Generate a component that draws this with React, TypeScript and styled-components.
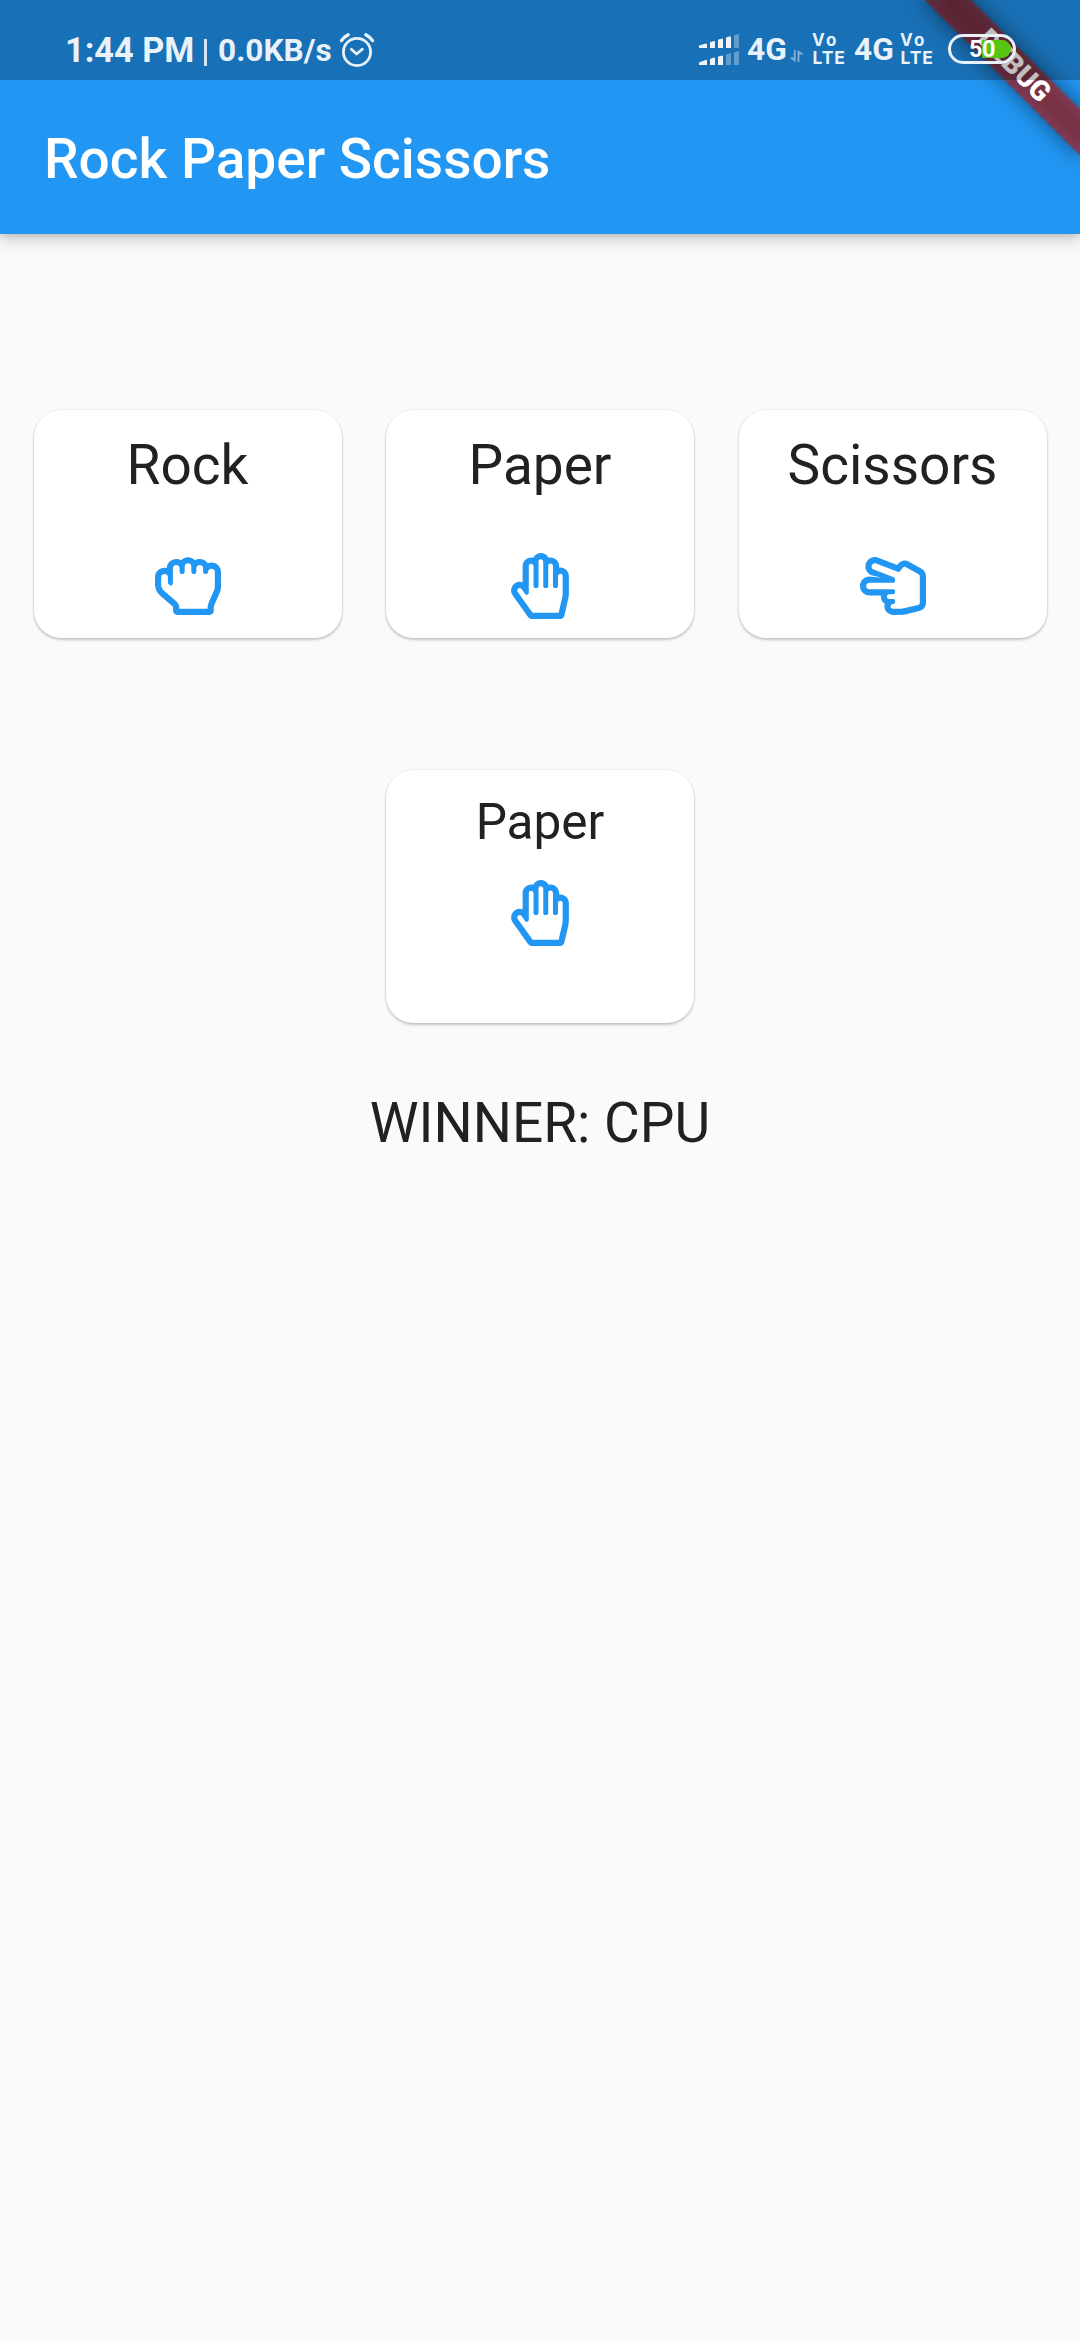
import React from "react";
import styled, { createGlobalStyle } from "styled-components";
import { FaRegHandPaper, FaRegHandRock, FaRegHandScissors } from "react-icons/fa";
import type { IconType } from "react-icons";

const GlobalStyle = createGlobalStyle`
  html, body { margin: 0; padding: 0; background: #fafafa; }
  * { box-sizing: border-box; }
`;

const Screen = styled.div`
  position: relative;
  width: 1080px;
  height: 2340px;
  overflow: hidden;
  display: flex;
  flex-direction: column;
  background: #fafafa;
  color: #212121;
  font-family: Roboto, "Liberation Sans", sans-serif;
`;

const Header = styled.header`
  flex: none;
  display: flex;
  flex-direction: column;
  height: 234px;
  background: #2196f3;
  box-shadow: 0 8px 14px rgba(0, 0, 0, 0.14), 0 2px 6px rgba(0, 0, 0, 0.14);
`;

const StatusBar = styled.div`
  position: relative;
  z-index: 2;
  flex: none;
  display: flex;
  align-items: flex-start;
  height: 80px;
  padding: 0 64px 0 65px;
  background: rgba(0, 0, 0, 0.25);
  color: #e9f1f9;
  font-weight: 700;
  white-space: nowrap;
`;

const StatusText = styled.span<{ $size: number; $top: number; $width: number; $gap?: number }>`
  flex: none;
  width: ${(p) => p.$width}px;
  margin-top: ${(p) => p.$top}px;
  margin-right: ${(p) => p.$gap ?? 0}px;
  font-size: ${(p) => p.$size}px;
  line-height: 40px;
`;

const Divider = styled.span`
  flex: none;
  width: 3px;
  height: 27px;
  margin: 39px 11px 0 10px;
  background: #d5e4f2;
`;

const StatusGlyph = styled.svg<{ $top: number; $gap?: number }>`
  flex: none;
  display: block;
  margin-top: ${(p) => p.$top}px;
  margin-right: ${(p) => p.$gap ?? 0}px;
`;

const Spacer = styled.span`
  flex: 1;
`;

const VolteBox = styled.span<{ $gap: number }>`
  flex: none;
  display: flex;
  flex-direction: column;
  width: 34px;
  margin-top: 31px;
  margin-right: ${(p) => p.$gap}px;
  font-family: Inter, Roboto, sans-serif;
  font-weight: 700;
  font-size: 17.5px;
  line-height: 18px;
`;

const VolteTop = styled.span`
  font-size: 17px;
  letter-spacing: 2.4px;
`;

const VolteBottom = styled.span`
  padding-left: 0.5px;
  letter-spacing: 0.9px;
`;

const Battery = styled.span`
  position: relative;
  flex: none;
  display: flex;
  align-items: center;
  justify-content: center;
  width: 68px;
  height: 30px;
  margin-top: 34px;
  border: 3px solid #e9f0f6;
  border-radius: 15px;
`;

const BatteryFill = styled.span`
  position: absolute;
  top: 3px;
  right: 2px;
  width: 29px;
  height: 18px;
  border-radius: 1px 9px 9px 1px;
  background: #55c510;
`;

const BatteryLevel = styled.span`
  position: relative;
  color: #fff;
  font-size: 23.5px;
  line-height: 26px;
  letter-spacing: -0.5px;
`;

const AppBar = styled.div`
  flex: 1;
  display: flex;
  align-items: center;
  padding: 4px 44px 0;
`;

const Title = styled.h1`
  margin: 0;
  color: #fff;
  font-size: 55px;
  font-weight: 500;
  line-height: 64px;
`;

const BannerClip = styled.div`
  position: absolute;
  z-index: 1;
  top: 0;
  right: 0;
  width: 240px;
  height: 234px;
  overflow: hidden;
  pointer-events: none;
`;

const BannerPivot = styled.div`
  position: absolute;
  top: 0;
  left: 240px;
  width: 0;
  height: 0;
  transform: rotate(45deg);
`;

const BannerShadow = styled.div`
  position: absolute;
  top: 77px;
  left: -110px;
  width: 220px;
  height: 33px;
  background: rgba(0, 0, 0, 0.5);
  filter: blur(10.9px);
`;

const BannerStrip = styled.div`
  position: absolute;
  top: 77px;
  left: -110px;
  width: 220px;
  height: 33px;
  background: rgba(183, 28, 28, 0.627);
  color: #fff;
  font-size: 28.05px;
  font-weight: 900;
  line-height: 31px;
  text-align: center;
`;

const Body = styled.main`
  display: flex;
  flex-direction: column;
  align-items: center;
  padding-top: 176px;
`;

const Choices = styled.div`
  display: flex;
  width: 100%;
  justify-content: center;
  gap: 44.5px;
`;

const Card = styled.div<{ $height: number; $pad: number }>`
  display: flex;
  flex-direction: column;
  align-items: center;
  width: 308px;
  height: ${(p) => p.$height}px;
  padding-top: ${(p) => p.$pad}px;
  border-radius: 27.5px;
  background: #fff;
  box-shadow: 0 2px 3px rgba(0, 0, 0, 0.2), 0 0 2px rgba(0, 0, 0, 0.12);
`;

const CardLabel = styled.span<{ $size: number; $gap: number }>`
  margin-bottom: ${(p) => p.$gap}px;
  font-size: ${(p) => p.$size}px;
  line-height: 64px;
`;

const Hand = styled.span`
  display: flex;
  height: 66px;
  color: #2196f3;

  svg {
    display: block;
    width: auto;
    height: 66px;
  }
`;

const CpuPick = styled.div`
  margin-top: 132px;
`;

const Winner = styled.p`
  margin: 68px 0 0;
  font-size: 55px;
  line-height: 64px;
`;

const choices: { label: string; Icon: IconType }[] = [
  { label: "Rock", Icon: FaRegHandRock },
  { label: "Paper", Icon: FaRegHandPaper },
  { label: "Scissors", Icon: FaRegHandScissors },
];

const AlarmIcon = () => (
  <StatusGlyph $top={32} width="36" height="36" viewBox="0 0 36 36" fill="none" stroke="#e9f1f9" strokeLinecap="round">
    <circle cx="18" cy="20" r="13.6" strokeWidth="2.8" />
    <path d="M12.4 17.2 L17.6 22 L23.4 17.2" strokeWidth="2.8" strokeLinejoin="round" />
    <path d="M2.5 8.6 Q5 5 9.2 2.8 M33.5 8.6 Q31 5 26.8 2.8" strokeWidth="3.4" />
  </StatusGlyph>
);

const SignalIcon = () => (
  <StatusGlyph $top={34} $gap={8} width="40" height="31" viewBox="0 0 40 31" fill="#eef4fa">
    <path d="M0 14 V11.6 L7 9.5 Q8 9.4 8 10.4 V14 Z" />
    <path d="M11 14 V8.2 L15 7 Q16 7 16 8 V14 Z" />
    <path d="M19 14 V5.8 L23 4.6 Q24 4.6 24 5.6 V14 Z" />
    <path d="M27 14 V3.6 L31 2.2 Q32 2.2 32 3.2 V14 Z" />
    <path opacity=".35" d="M35 14 V1.5 L39 .1 Q40 .1 40 1.1 V14 Z" />
    <path d="M0 31 V28.6 L7 25.8 Q8 25.7 8 26.7 V31 Z" />
    <path d="M11 31 V25 L15 23.6 Q16 23.6 16 24.6 V31 Z" />
    <path d="M19 31 V22.8 L23 21.4 Q24 21.4 24 22.4 V31 Z" />
    <path opacity=".35" d="M27 31 V20.6 L31 19.2 Q32 19.2 32 20.2 V31 Z" />
    <path opacity=".35" d="M35 31 V18.4 L39 17 Q40 17 40 18 V31 Z" />
  </StatusGlyph>
);

const DataArrows = () => (
  <StatusGlyph $top={50} $gap={9} width="13" height="12" viewBox="0 0 13 12" fill="#e9f1f9" opacity=".5">
    <path d="M3.8 0 H5.6 V12 L0 8.2 V7.4 H3.8 Z" />
    <path d="M9.4 12 H7.6 V0 L13 3.8 V4.6 H9.4 Z" />
  </StatusGlyph>
);

const Volte = ({ gap }: { gap: number }) => (
  <VolteBox $gap={gap}>
    <VolteTop>Vo</VolteTop>
    <VolteBottom>LTE</VolteBottom>
  </VolteBox>
);

export default function App() {
  return (
    <Screen>
      <GlobalStyle />
      <Header>
        <StatusBar>
          <StatusText $size={34.3} $top={30} $width={129}>1:44 PM</StatusText>
          <Divider />
          <StatusText $size={31.6} $top={31} $width={113} $gap={8}>0.0KB/s</StatusText>
          <AlarmIcon />
          <Spacer />
          <SignalIcon />
          <StatusText $size={31.7} $top={30} $width={38} $gap={5}>4G</StatusText>
          <DataArrows />
          <Volte gap={8} />
          <StatusText $size={31.7} $top={30} $width={38} $gap={8}>4G</StatusText>
          <Volte gap={14} />
          <Battery>
            <BatteryFill />
            <BatteryLevel>50</BatteryLevel>
          </Battery>
        </StatusBar>
        <AppBar>
          <Title>Rock Paper Scissors</Title>
        </AppBar>
      </Header>
      <BannerClip>
        <BannerPivot>
          <BannerShadow />
          <BannerStrip>DEBUG</BannerStrip>
        </BannerPivot>
      </BannerClip>
      <Body>
        <Choices>
          {choices.map(({ label, Icon }) => (
            <Card key={label} $height={228} $pad={23}>
              <CardLabel $size={55} $gap={56}>{label}</CardLabel>
              <Hand><Icon /></Hand>
            </Card>
          ))}
        </Choices>
        <CpuPick>
          <Card $height={253} $pad={20}>
            <CardLabel $size={49.5} $gap={26}>Paper</CardLabel>
            <Hand><FaRegHandPaper /></Hand>
          </Card>
        </CpuPick>
        <Winner>WINNER: CPU</Winner>
      </Body>
    </Screen>
  );
}
